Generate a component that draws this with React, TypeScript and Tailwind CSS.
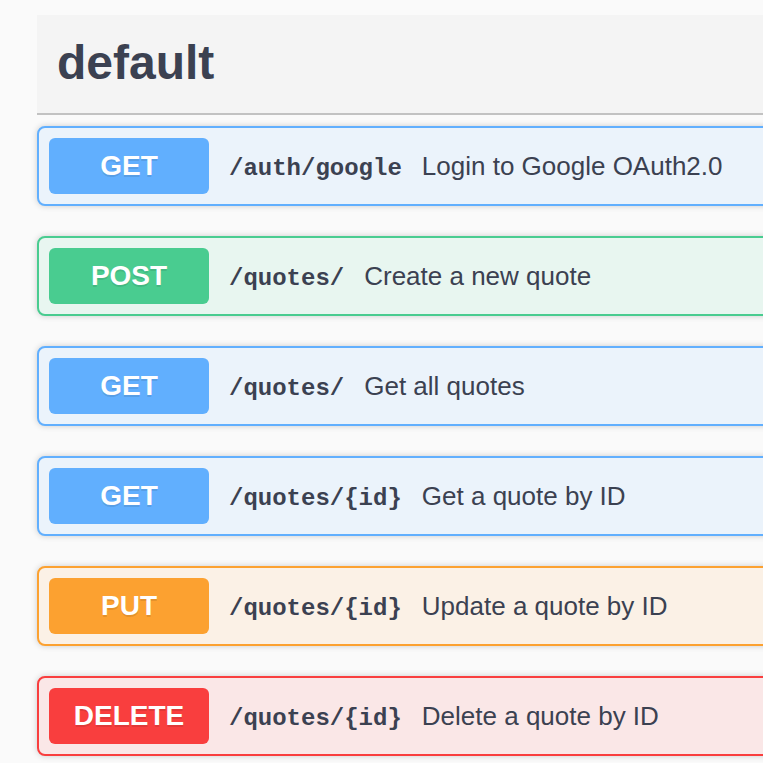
import React from "react";

type Op = {
  method: string;
  path: string;
  desc: string;
  badge: string;
  bg: string;
  border: string;
};

const ops: Op[] = [
  { method: "GET", path: "/auth/google", desc: "Login to Google OAuth2.0", badge: "bg-[#61affe]", bg: "bg-[#ebf3fb]", border: "border-[#61affe]" },
  { method: "POST", path: "/quotes/", desc: "Create a new quote", badge: "bg-[#49cc90]", bg: "bg-[#e8f6f0]", border: "border-[#49cc90]" },
  { method: "GET", path: "/quotes/", desc: "Get all quotes", badge: "bg-[#61affe]", bg: "bg-[#ebf3fb]", border: "border-[#61affe]" },
  { method: "GET", path: "/quotes/{id}", desc: "Get a quote by ID", badge: "bg-[#61affe]", bg: "bg-[#ebf3fb]", border: "border-[#61affe]" },
  { method: "PUT", path: "/quotes/{id}", desc: "Update a quote by ID", badge: "bg-[#fca130]", bg: "bg-[#fbf1e6]", border: "border-[#fca130]" },
  { method: "DELETE", path: "/quotes/{id}", desc: "Delete a quote by ID", badge: "bg-[#f93e3e]", bg: "bg-[#fae7e7]", border: "border-[#f93e3e]" },
];

export default function App() {
  return (
    <div className="w-[763px] h-[763px] overflow-hidden bg-[#fafafa] pl-[37px] pt-[15px] text-[#3b4151] [font-family:'Liberation_Sans',Arial,sans-serif]">
      <div className="w-[820px]">
        <div className="h-[100px] bg-[#f4f4f4] border-b-2 border-[#c2c2c2] pl-[20px] flex items-center">
          <h4 className="text-[48px] font-bold leading-[58px] pb-[2px]">default</h4>
        </div>
        <div className="mt-[11px] flex flex-col gap-[30px]">
          {ops.map((op, i) => (
            <div
              key={i}
              className={`h-[80px] rounded-[8px] border-2 ${op.border} ${op.bg} shadow-[0_0_6px_rgba(0,0,0,0.19)] flex items-center px-[10px]`}
            >
              <div
                className={`w-[160px] h-[56px] rounded-[6px] ${op.badge} flex items-center justify-center text-white text-[28px] font-bold [text-shadow:0_2px_0_rgba(0,0,0,0.1)]`}
              >
                {op.method}
              </div>
              <span className="px-[20px] pt-[5px] text-[24px] font-bold [font-family:'Liberation_Mono','Courier_New',monospace]">
                {op.path}
              </span>
              <span className="text-[26px]">{op.desc}</span>
            </div>
          ))}
        </div>
      </div>
    </div>
  );
}
